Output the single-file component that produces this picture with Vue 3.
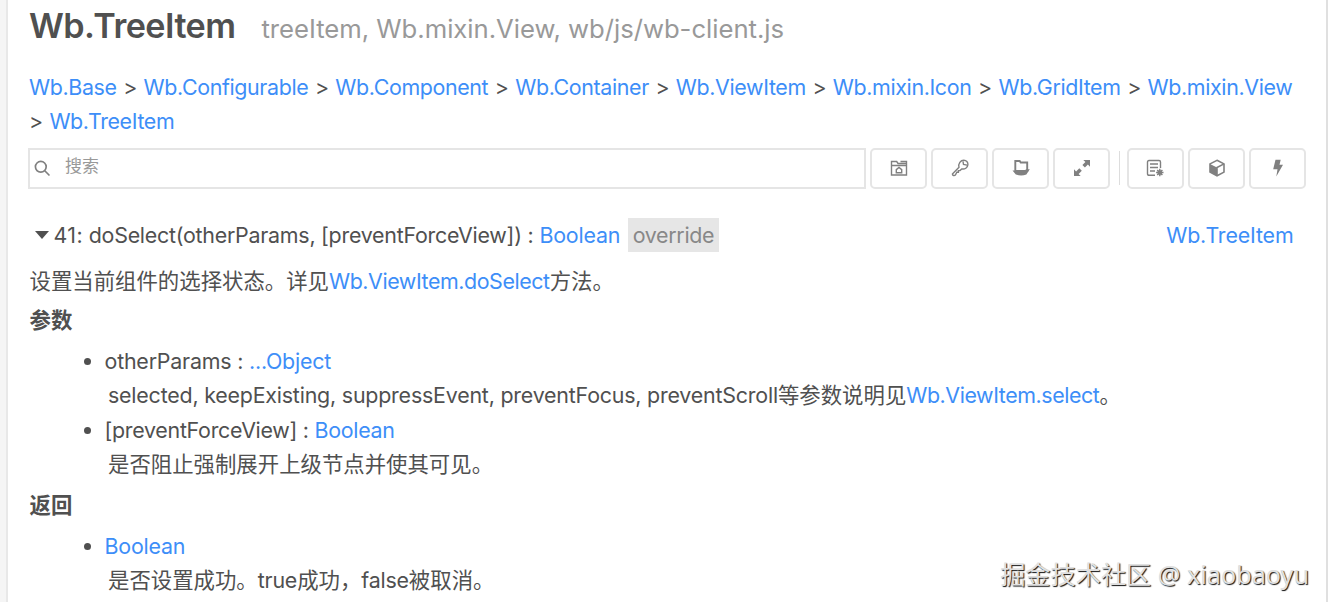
<template>
  <div class="page">
    <div class="doc">
      <header class="title-row">
        <h1>Wb.TreeItem</h1>
        <span class="sub">treeItem, Wb.mixin.View, wb/js/wb-client.js</span>
      </header>

      <nav class="crumbs">
        <template v-for="(item, i) in crumbs" :key="item">
          <span v-if="i">&gt;</span>
          <a>{{ item }}</a>
        </template>
      </nav>

      <div class="toolbar">
        <label class="search">
          <svg width="17" height="17" viewBox="0 0 18 18" fill="none" stroke="#808080" stroke-width="1.8">
            <circle cx="7.2" cy="7.2" r="5.7"/>
            <path d="M11.4 11.4L16.4 16.4"/>
          </svg>
          <span class="placeholder">搜索</span>
        </label>
        <button><svg viewBox="0 0 18 18" class="line"><path d="M1.5 16V2.5h5.2l1.3 2h8.5V16zM1.5 6.5h15M8 4.5h8.5v-2h-6M6.3 13.7v-3l2.7-2.2 2.7 2.2v3z"/></svg></button>
        <button><svg viewBox="0 0 18 18" class="line"><path d="M8 8.3C7 4.4 9.6 1.2 12.8 1.2c2.6 0 4.3 2 4.1 4.4-.3 3.2-3.1 5-6.2 4.3L9 11.6H7.4v1.7H5.8L4.4 16c-1 .9-3 .7-3-1z"/><path d="M12 2.3l.5 3.2 3.6.6" /></svg></button>
        <button><svg viewBox="0 0 18 18"><path d="M3.3 2h4.4l1 1.5h6.5V12H3.3z" fill="none" stroke="#808080" stroke-width="1.9"/><path d="M.5 11.5h12l1.7-1.3h3.6l-3.4 5.3c-3.5 1.3-7 1.3-10.6 0z" fill="#808080"/></svg></button>
        <button><svg viewBox="0 0 18 18" fill="#808080"><path d="M10.3 1H17v6.7l-2.1-2.1-3 3-2.5-2.5 3-3zM1 10.3l2.1 2.1 3.2-3.2 2.5 2.5-3.2 3.2L7.7 17H1z"/></svg></button>
        <i class="divider"></i>
        <button><svg viewBox="0 0 18 18" class="line"><path d="M9 16.3H3c-1 0-1.5-.5-1.5-1.5V3c0-1 .5-1.5 1.5-1.5h10c1 0 1.5.5 1.5 1.5v6M4 5h8M4 8.5h8M4 12h5"/><circle cx="13.8" cy="13.5" r="2.3" fill="#808080" stroke="none"/><path d="M13.8 9.8v7.4M10.1 13.5h7.4M11.2 10.9l5.2 5.2M16.4 10.9l-5.2 5.2"/></svg></button>
        <button><svg viewBox="0 0 18 18"><path d="M9 1.3l7 3.6v8.2l-7 3.7-7-3.7V4.9z" fill="#fff" stroke="#808080" stroke-width="1.6"/><path d="M2 5l7 3.6v8.2l-7-3.7z" fill="#808080"/><path d="M9 16.8V8.5l7-3.6" fill="none" stroke="#808080" stroke-width="1.6"/></svg></button>
        <button><svg viewBox="0 0 18 18" fill="#808080"><path d="M6.5 .8h5.2l-1.2 5H14L7.3 17.5 8.5 10.3H4.2z"/></svg></button>
      </div>

      <div class="method">
        <i class="arrow"></i>
        <span class="signature"><span class="num">41:</span> doSelect(otherParams, [preventForceView]) :</span>
        <a class="type">Boolean</a>
        <span class="badge">override</span>
        <a class="owner">Wb.TreeItem</a>
      </div>

      <p class="desc">设置当前组件的选择状态。详见<a class="ref">Wb.ViewItem.doSelect</a>方法。</p>
      <h2>参数</h2>
      <ul>
        <li>
          <div class="en">otherParams : <a>...Object</a></div>
          <div class="note"><span class="en">selected, keepExisting, suppressEvent, preventFocus, preventScroll</span>等参数说明见<a class="ref">Wb.ViewItem.select</a>。</div>
        </li>
        <li>
          <div class="en param">[preventForceView] : <a>Boolean</a></div>
          <div class="note">是否阻止强制展开上级节点并使其可见。</div>
        </li>
      </ul>
      <h2 class="ret">返回</h2>
      <ul>
        <li>
          <div class="en"><a>Boolean</a></div>
          <div class="note">是否设置成功。<span class="en">true</span>成功，<span class="en">false</span>被取消。</div>
        </li>
      </ul>
    </div>
    <div class="watermark">掘金技术社区 @ xiaobaoyu</div>
  </div>
</template>

<script setup>
const crumbs = ['Wb.Base', 'Wb.Configurable', 'Wb.Component', 'Wb.Container', 'Wb.ViewItem', 'Wb.mixin.Icon', 'Wb.GridItem', 'Wb.mixin.View', 'Wb.TreeItem']
</script>

<style>
body {
  background: #fff;
}
</style>

<style scoped>
.page {
  position: relative;
  box-sizing: border-box;
  width: 1328px;
  height: 602px;
  border-left: 6px solid #f5f5f5;
  font-family: Inter, "Noto Sans CJK SC", sans-serif;
  font-size: 21.4px;
  line-height: 34px;
  color: #505050;
  white-space: nowrap;
}

.doc {
  box-sizing: border-box;
  height: 602px;
  border-left: 2px solid #e8e8e8;
  border-right: 2px solid #e0e0e0;
  padding: 0 20px;
}

a {
  color: #3d8ef8;
}

.en {
  letter-spacing: -0.2px;
}

.title-row {
  display: flex;
  align-items: baseline;
  gap: 26px;
  height: 71px;
  padding-left: 1px;
}

h1 {
  margin: 4.5px 0 0;
  font-size: 34.2px;
  line-height: 42px;
  font-weight: 600;
  letter-spacing: -0.55px;
}

.sub {
  font-size: 25.7px;
  letter-spacing: -0.03px;
  color: #999;
}

.crumbs {
  display: flex;
  flex-wrap: wrap;
  column-gap: 6.6px;
  height: 67px;
  padding-left: 1px;
  letter-spacing: -0.36px;
  line-height: 33.5px;
}

.toolbar {
  display: flex;
  gap: 4px;
  height: 41px;
  margin-top: 9.5px;
}

.search {
  box-sizing: border-box;
  flex: none;
  display: flex;
  align-items: center;
  width: 838px;
  border: 2px solid #e5e5e5;
  padding-left: 4px;
  gap: 14px;
  font-size: 17px;
  color: #999;
}

.placeholder {
  padding-bottom: 4px;
}

button {
  box-sizing: border-box;
  flex: none;
  display: flex;
  align-items: center;
  justify-content: center;
  width: 57.1px;
  border: 2px solid #e5e5e5;
  border-radius: 5px;
  background: #fff;
  padding: 0;
}

button svg {
  width: 18px;
  height: 18px;
}

.line {
  fill: none;
  stroke: #808080;
  stroke-width: 1.4;
}

.divider {
  flex: none;
  width: 1px;
  margin: 3px 3px 4px 4.5px;
  background: #ddd;
}

.method {
  display: flex;
  align-items: center;
  height: 34px;
  margin-top: 29.5px;
}

.arrow {
  border: 7.5px solid transparent;
  border-top: 8px solid #505050;
  border-bottom: 0;
  margin: 0 5px 0 6.5px;
}

.signature {
  letter-spacing: -0.25px;
}

.num {
  letter-spacing: 0.4px;
}

.type {
  margin: 0 8px 0 6px;
  letter-spacing: -0.2px;
}

.badge {
  background: #e6e6e6;
  color: #888;
  padding: 0 4.5px;
  letter-spacing: -0.3px;
}

.owner {
  margin: 0 12.5px 0 auto;
  letter-spacing: -0.15px;
}

.desc {
  margin: 11.5px 0 0 1.5px;
}

.ref {
  letter-spacing: -0.42px;
}

h2 {
  margin: 5px 0 0 1.5px;
  font-size: 21.4px;
}

.ret {
  margin-top: 7px;
}

ul {
  margin: 7.5px 0 0;
  padding-left: 76.5px;
}

li + li {
  margin-top: 0.5px;
}

.param {
  letter-spacing: -0.28px;
}

.note {
  padding-left: 3.5px;
}

.watermark {
  position: absolute;
  right: 19px;
  bottom: 11px;
  font-family: "Noto Sans", "Noto Sans CJK SC", sans-serif;
  font-size: 25.2px;
  color: #e0e0e0;
  text-shadow: 1px 1px 1px #111;
}
</style>
